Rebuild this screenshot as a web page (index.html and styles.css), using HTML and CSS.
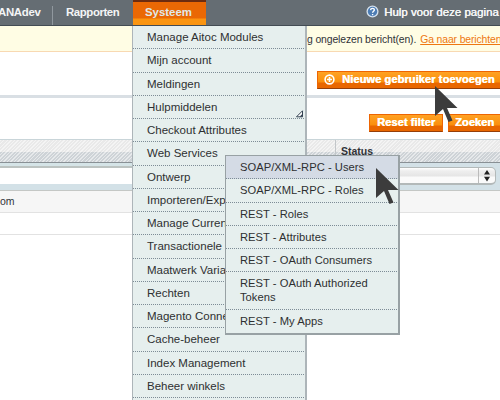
FILE: index.html
```html
<!DOCTYPE html>
<html lang="nl">
<head>
<meta charset="utf-8">
<title>Gebruikers</title>
<link rel="stylesheet" href="styles.css">
</head>
<body>
<nav class="nav">
  <span class="nav-item site">ANAdev</span>
  <span class="nav-item reports">Rapporten</span>
  <span class="nav-item active">Systeem</span>
  <span class="help"><svg width="13" height="13" viewBox="0 0 13 13"><circle cx="6.5" cy="6.5" r="5.4" fill="#4d7db4" stroke="#d5e1ed" stroke-width="1.3"/><path d="M4.6 5.1C4.7 2.7 8.5 2.9 8.3 5.1C8.2 6.3 6.6 6.3 6.6 7.8M6.6 8.9V10.2" fill="none" stroke="#fff" stroke-width="1.4"/></svg>Hulp voor deze pagina</span>
</nav>
<div class="message"><span>g ongelezen bericht(en).</span><a>Ga naar berichten</a></div>
<header class="page-head"><button class="btn add"><svg width="11" height="11" viewBox="0 0 11 11"><circle cx="5.5" cy="5.5" r="4.4" fill="none" stroke="#fff" stroke-width="1.6"/><path d="M5.5 3V8M3 5.5H8" stroke="#fff" stroke-width="1.6"/></svg>Nieuwe gebruiker toevoegen</button></header>
<div class="filters"><button class="btn">Reset filter</button><button class="btn search">Zoeken</button></div>
<section class="grid">
  <div class="grid-head"><span class="col-status">Status</span></div>
  <div class="grid-filter">
    <div class="text-filter"></div>
    <div class="select-filter"><div class="select"><span class="arrows"><svg width="6" height="12" viewBox="0 0 6 12"><path d="M3 0L6 4.6H0ZM0 6.8H6L3 11.4Z" fill="#222"/></svg></span></div></div>
  </div>
  <div class="row shaded">om</div>
  <div class="row"></div>
</section>
<ul class="menu">
  <li>Manage Aitoc Modules</li>
  <li>Mijn account</li>
  <li>Meldingen</li>
  <li class="parent">Hulpmiddelen<svg class="corner" width="8" height="8" viewBox="0 0 8 8"><path d="M.5 6.8L6.5 .8V6.8Z" fill="#fff" stroke="#344252"/><path d="M3.5 6.8L6.5 3.8V6.8Z" fill="#344252"/></svg></li>
  <li>Checkout Attributes</li>
  <li>Web Services</li>
  <li>Ontwerp</li>
  <li>Importeren/Exporteren</li>
  <li>Manage Currency</li>
  <li>Transactionele e-mails</li>
  <li>Maatwerk Variabelen</li>
  <li>Rechten</li>
  <li>Magento Connect</li>
  <li>Cache-beheer</li>
  <li>Index Management</li>
  <li>Beheer winkels</li>
</ul>
<ul class="menu submenu">
  <li class="hover">SOAP/XML-RPC - Users</li>
  <li>SOAP/XML-RPC - Roles</li>
  <li>REST - Roles</li>
  <li>REST - Attributes</li>
  <li>REST - OAuth Consumers</li>
  <li class="double">REST - OAuth Authorized<br>Tokens</li>
  <li>REST - My Apps</li>
</ul>
<svg class="cursor on-button" width="24" height="38" viewBox="0 0 24 38"><path d="M1 0V30L9 23L14.5 36L18.5 34.5L13 22L23.5 22Z" fill="#3c3c3c"/></svg>
<svg class="cursor on-menu" width="24" height="38" viewBox="0 0 24 38"><path d="M1 0V30L9 23L14.5 36L18.5 34.5L13 22L23.5 22Z" fill="#3c3c3c"/></svg>
</body>
</html>
```
FILE: styles.css
```css
* { box-sizing: border-box; }
html { height: 400px; overflow: hidden; }
body { margin: 0; width: 500px; height: 400px; overflow: hidden; position: relative; background: #fff; color: #303238; font: 11.5px/14px "Liberation Sans", Arial, sans-serif; }
.nav { height: 26px; display: flex; background: #656d73; border-bottom: 1px solid #434c54; color: #f4f5f6; font-weight: bold; font-size: 11.4px; }
.nav-item { height: 25px; line-height: 24px; white-space: nowrap; }
.site { width: 53px; margin: 6px 0 0; height: 19px; line-height: 12px; border-right: 1px solid #90989e; text-indent: -2px; letter-spacing: -.3px; }
.reports { width: 80px; padding-left: 13px; letter-spacing: -.4px; }
.active { width: 73px; padding-left: 12px; background: linear-gradient(#6c2c10 2px, #ea6804 2px, #ea6804 18px, #fb9511 19px); color: #dfeaea; letter-spacing: 0; }
.help { margin-left: auto; width: 134px; display: flex; gap: 5px; align-items: center; font-weight: normal; font-size: 11.4px; white-space: nowrap; letter-spacing: .03px; padding-bottom: 2px; text-shadow: .4px 0 #fff; }
svg { flex: none; }
.message { height: 26px; background: #fffde4; border-bottom: 1px solid #f8d9b2; padding-left: 307px; display: flex; gap: 4px; line-height: 27px; font-size: 10.4px; letter-spacing: -.12px; white-space: nowrap; }
.message a { color: #ee7711; text-decoration: underline; }
.page-head { height: 46px; border-bottom: 3px solid #d9dfe4; padding: 19px 0 0 317px; }
.btn { display: flex; flex: none; align-items: center; justify-content: center; height: 18px; padding: 0 0 2px; border: 1px solid #ed6502; border-bottom-color: #963f08; background: linear-gradient(#ffa224, #fa8f0c 10px, #e96700 11px); color: #fff; font: bold 11px/14px "Liberation Sans", Arial, sans-serif; white-space: nowrap; text-shadow: .5px 0 #fff; }
.add { width: 184px; justify-content: flex-start; padding-left: 6px; gap: 7px; letter-spacing: .11px; }
.filters { height: 41px; padding: 16px 0 0 369px; display: flex; gap: 5px; }
.filters .btn { width: 74px; letter-spacing: .1px; }
.filters .search { width: 60px; justify-content: flex-start; padding-left: 6px; }
.grid-head { height: 24px; border-top: 1px solid #c9d5d9; border-bottom: 1px solid #899095; background: repeating-linear-gradient(135deg, rgba(255,255,255,.5) 0 1px, transparent 1px 2.5px), linear-gradient(#e9e9e9 12px, #ced3d7 12px); display: flex; }
.col-status { margin-left: 335px; padding: 5px; height: 22px; line-height: 13px; border-left: 1px solid #c2c6c9; font-weight: bold; font-size: 10.5px; }
.grid-filter { height: 28px; display: flex; background: #d3e1e7; border-bottom: 1px solid #c4c7c5; }
.text-filter { width: 133px; height: 21px; background: #fff; border-top: 3px solid #d5e4e7; box-shadow: inset 0 2px #bcc3c1; }
.select-filter { flex: 1; padding: 4px 4px 3px 180px; }
.select { height: 18px; display: flex; justify-content: flex-end; border: 1px solid #b3b9b9; border-bottom-width: 2px; border-radius: 5px; background: linear-gradient(#fff, #eee 3px, #e5e5e5 8px, #fafafa 9px); }
.arrows { width: 17px; border-left: 1px solid #bbb; display: flex; align-items: center; justify-content: center; }
.row { height: 22px; border-bottom: 1px solid #e2e2e2; line-height: 20px; font-size: 10.5px; letter-spacing: -.1px; }
.shaded { background: #f6f6f6; }
.menu { position: absolute; left: 132px; top: 26px; width: 174.5px; height: 374px; margin: 0; padding: 0; list-style: none; background: #e6efee; border: solid #adb5b9; border-width: 0 2px 0 1px; color: #2e2f31; white-space: nowrap; }
.menu li { height: 23.28px; padding: 4px 0 0 14px; background: repeating-linear-gradient(90deg, #7d8c96 0 1px, transparent 1px 2px) bottom / 100% 1px no-repeat; }
.menu .parent { position: relative; }
.corner { position: absolute; right: 1px; bottom: 1px; }
.submenu { left: 225px; top: 155px; height: 180px; border-width: 1px 2px 2px 1px; border-color: #98a1a4; font-size: 11.2px; }
.submenu li { letter-spacing: .02px; }
.submenu li:last-child { background: none; }
.submenu .hover { background-color: #d4dbe5; }
.submenu .double { height: 37.2px; }
.cursor { position: absolute; }
.on-button { left: 434px; top: 86px; }
.on-menu { left: 375px; top: 168px; }
```
